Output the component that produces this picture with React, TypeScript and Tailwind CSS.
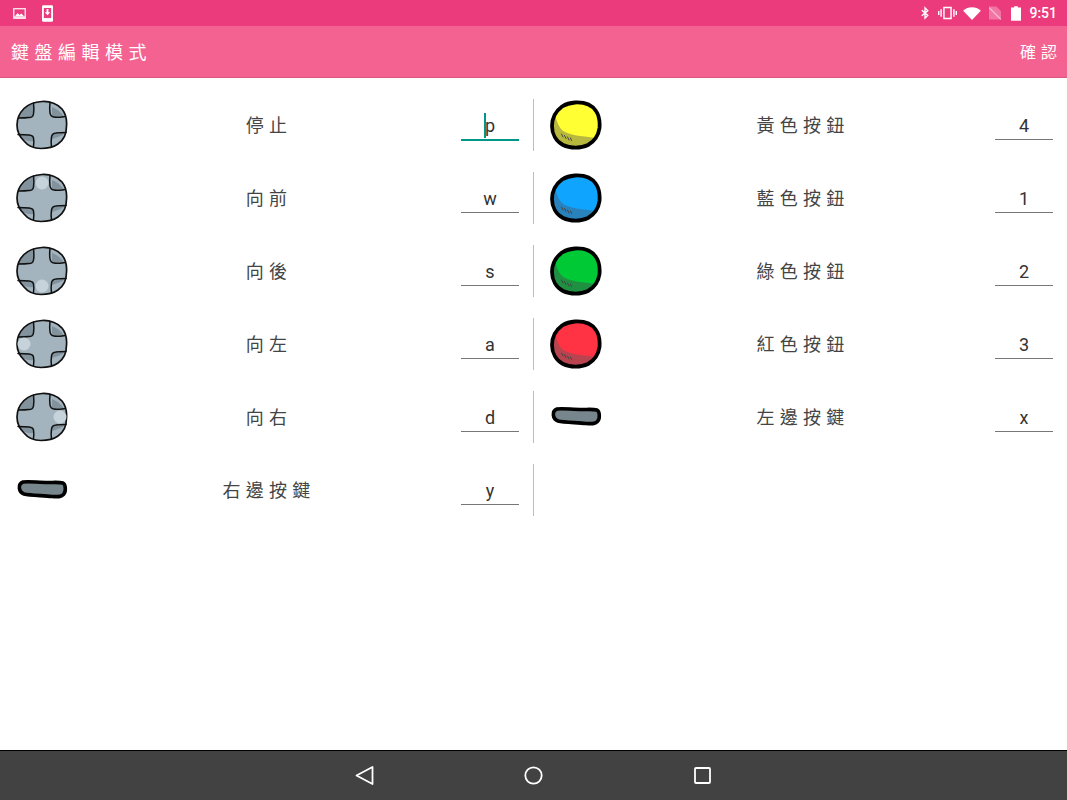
import React from 'react';

const FONT = '"Roboto", "Noto Sans CJK TC", sans-serif';

const OUTLINE = 'M26 2.500C34 2 42 5 46 10C50 15 51 21 50.500 27C50.500 34 48 41 42 45C37 48.500 32 49.500 25 49.500C19 49.500 12 47 8 42C3.500 37.500 1 32 1 26C1 19 3.500 14 8 9.500C12.500 5 19 3 26 2.500Z';

const DPad = ({ lit }: { lit?: 'up' | 'down' | 'left' | 'right' }) => {
    const spots = { up: [26, 11], down: [26, 41], left: [8, 26], right: [44, 26] };
    return (
        <svg width="52" height="52" viewBox="0 0 52 52" className="shrink-0">
            <path d={OUTLINE} fill="#a3b4be" />
            <path d="M17.500 4.500L17.500 18.500L2 19C4 12 10 7 17.500 4.500Z" fill="#82939d" />
            <path d="M36 8C41 10 45 13 48 17.500L36 17.500Z" fill="#82939d" />
            <path d="M2 36L17.500 36L17.500 42C12 43 6 41 2 36Z" fill="#82939d" />
            <path d="M36 40C41 38 46 37 49 34L36 34Z" fill="#82939d" />
            <path d={OUTLINE} fill="none" stroke="#111" strokeWidth="1.700" />
            <g fill="none" stroke="#111" strokeWidth="1.500" strokeLinecap="round">
                <path d="M17.500 4C18 8 18 12 17.500 15Q17 18.500 13 18.500C9 19 6 19 2.500 19" />
                <path d="M34 3.500C33.500 8 33.500 11 34 14Q34.500 17.500 38 18C42 18.500 45 18 49 17.500" />
                <path d="M2 35.500C6 35.500 9 35.500 13 36Q17 36.500 17.500 39C18 42 18 44.500 17.500 47.500" />
                <path d="M50 33.500C46 33.500 43 33.500 40 34Q36 34.500 35.500 38C35 41 35 44 35.500 48" />
            </g>
            {lit && <circle cx={spots[lit][0]} cy={spots[lit][1]} r="6.500" fill="#c6d3da" />}
        </svg>
    );
};

const BLOB = 'M25 3.500C34 3 42 6 46 12C49.500 17 50 23 49.500 29C48.500 36 45 42 38 46C31 49.500 20 49.500 13 46C6 42.500 2 35 2 27C2 19 6 12 12 7.500C16 5 20 3.800 25 3.500Z';

const Ball = ({ main, dark }: { main: string; dark: string }) => (
    <svg width="52" height="52" viewBox="0 0 52 52" className="shrink-0">
        <path d={BLOB} fill={dark} />
        <path d="M5 17C7 23 9 28 12 31C18 36 30 37 46 39C48 35 49 32 49.500 29C50 23 49.500 17 46 12C42 6 34 3 25 3.500C20 3.800 16 5 12 7.500C9 10 6 13 5 17Z" fill={main} />
        <g stroke="#444" strokeWidth="1" strokeLinecap="round">
            <path d="M11.500 35L13 38" />
            <path d="M14.500 36.500L16 39.500" />
            <path d="M17.500 38L19 41" />
            <path d="M20.500 39L21.500 41.500" />
        </g>
        <path d={BLOB} fill="none" stroke="#000" strokeWidth="3.800" />
    </svg>
);

const Bar = () => (
    <svg width="52" height="52" viewBox="0 0 52 52" className="shrink-0">
        <path d="M7 18C12 17 22 18.500 32 18.500C38 18.500 43 18 47 19C50 20.500 50 28 47.500 30.500C45 33 42 33 36 32.500C26 31.500 14 31.500 8 30C2.500 28 1.500 20 7 18Z" fill="#77858d" stroke="#000" strokeWidth="3.600" />
    </svg>
);

type RowData = { icon: React.ReactNode; label: string; value: string; active?: boolean };

const left: RowData[] = [
    { icon: <DPad />, label: '停止', value: 'p', active: true },
    { icon: <DPad lit="up" />, label: '向前', value: 'w' },
    { icon: <DPad lit="down" />, label: '向後', value: 's' },
    { icon: <DPad lit="left" />, label: '向左', value: 'a' },
    { icon: <DPad lit="right" />, label: '向右', value: 'd' },
    { icon: <Bar />, label: '右邊按鍵', value: 'y' },
];

const right: RowData[] = [
    { icon: <Ball main="#ffff33" dark="#b8b83e" />, label: '黃色按鈕', value: '4' },
    { icon: <Ball main="#0fa5ff" dark="#2a82bd" />, label: '藍色按鈕', value: '1' },
    { icon: <Ball main="#00c936" dark="#1f8f42" />, label: '綠色按鈕', value: '2' },
    { icon: <Ball main="#ff3344" dark="#b84450" />, label: '紅色按鈕', value: '3' },
    { icon: <Bar />, label: '左邊按鍵', value: 'x' },
];

const KeyRow = ({ icon, label, value, active }: RowData) => (
    <div className="flex items-center h-[52px]">
        {icon}
        <div className="flex-1 pl-[9px] text-center text-[18px] tracking-[5.3px] text-[#444]">{label}</div>
        <div className={`relative w-[58px] h-[29px] text-center text-[18px] leading-[30px] text-[#333] border-b ${active ? 'border-transparent' : 'border-[#777]'}`}>
            {active && <span className="absolute left-[23px] top-[2px] w-[2px] h-[25px] bg-[#009688]" />}
            {active && <span className="absolute left-0 right-0 bottom-[-2px] h-[2px] bg-[#009688]" />}
            {value}
        </div>
    </div>
);

export default function App() {
    return (
        <div className="w-[1067px] h-[800px] flex flex-col bg-white overflow-hidden" style={{ fontFamily: FONT }}>
            {/* Status bar */}
            <div className="h-[26px] shrink-0 bg-[#ec3b7c] flex items-center text-white">
                <svg width="13" height="11" viewBox="0 0 14 12" className="ml-[13px]">
                    <path d="M0 0H14V12H0Z" fill="#fff" fillOpacity="0.85" />
                    <path d="M1.500 1.500H12.500V9H1.500Z" fill="#ec3b7c" />
                    <path d="M2 9L5 5.500L7 7.500L9 6L12 9Z" fill="#fff" />
                </svg>
                <svg width="11" height="17" viewBox="0 0 12 18" className="ml-[16px]">
                    <path d="M1.500 0H10.500Q12 0 12 1.500V16.500Q12 18 10.500 18H1.500Q0 18 0 16.500V1.500Q0 0 1.500 0Z" fill="#fff" />
                    <path d="M2 3H10V14H2Z" fill="#ec3b7c" />
                    <path d="M5 4H7V7.500H9L6 11L3 7.500H5Z" fill="#fff" />
                </svg>
                <div className="flex-1" />
                <svg width="8" height="14" viewBox="0 0 10 16" fill="none" stroke="#fff" strokeWidth="1.700">
                    <path d="M1 4.500L8.500 11L5 14.500V1.500L8.500 5L1 11.500" />
                </svg>
                <svg width="19" height="14" viewBox="0 0 20 14" fill="#fff" className="ml-[9px]">
                    <path d="M5.500 0.500H14.500V13.500H5.500ZM7 2V12H13V2Z" fillRule="evenodd" />
                    <path d="M2.500 3H4V11H2.500ZM0 5H1.500V9H0ZM16 3H17.500V11H16ZM18.500 5H20V9H18.500Z" />
                </svg>
                <svg width="18" height="13" viewBox="0 0 19 14" fill="#fff" className="ml-[6px]">
                    <path d="M0 4C5 -1 14 -1 19 4L9.500 14Z" />
                </svg>
                <svg width="12" height="14" viewBox="0 0 13 14" className="ml-[8px]">
                    <path d="M0 0H8L13 5V14H0Z" fill="#fff" fillOpacity="0.3" />
                    <path d="M0 1L13 14" stroke="#fff" strokeOpacity="0.45" strokeWidth="1.500" />
                </svg>
                <svg width="10" height="15" viewBox="0 0 11 16" fill="#fff" className="ml-[10px]">
                    <path d="M3.500 0H7.500V1.500H11V16H0V1.500H3.500Z" />
                </svg>
                <span className="ml-[8px] mr-[10px] text-[14px] font-medium leading-none">9:51</span>
            </div>

            {/* App bar */}
            <div className="h-[52px] shrink-0 bg-[#f46292] border-b border-[#d9577f] flex items-center justify-between pt-[2px] pl-[11px] pr-[5px] text-white">
                <span className="text-[18px] tracking-[5.5px]">鍵盤編輯模式</span>
                <span className="text-[16px] tracking-[5px]">確認</span>
            </div>

            {/* Key list */}
            <div className="flex-1 pt-[21px] flex">
                <div className="w-[534px] flex flex-col gap-[21px] pl-[16px] pr-[15px] ">
                    {left.map(r => (
                        <div key={r.label} className="relative">
                            <KeyRow {...r} />
                            <span className="absolute right-[-15px] top-0 h-[52px] w-[1px] bg-[#bdbdbd]" />
                        </div>
                    ))}
                </div>
                <div className="flex-1 flex flex-col gap-[21px] pl-[16px] pr-[14px]">
                    {right.map(r => <KeyRow key={r.label} {...r} />)}
                </div>
            </div>

            {/* Navigation bar */}
            <div className="h-[50px] shrink-0 bg-[#424242] border-t border-black flex items-center justify-center gap-[133px]">
                <svg width="36" height="24" viewBox="0 0 36 24" fill="none" stroke="#fff" strokeWidth="1.800" strokeLinejoin="round">
                    <path d="M25.500 3V20L9.500 11.500Z" />
                </svg>
                <svg width="36" height="24" viewBox="0 0 36 24" fill="none" stroke="#fff" strokeWidth="1.800">
                    <circle cx="17.500" cy="11.500" r="8.200" />
                </svg>
                <svg width="36" height="24" viewBox="0 0 36 24" fill="none" stroke="#fff" strokeWidth="1.800" strokeLinejoin="round">
                    <rect x="10" y="4" width="15" height="15" rx="1" />
                </svg>
            </div>
        </div>
    );
}
